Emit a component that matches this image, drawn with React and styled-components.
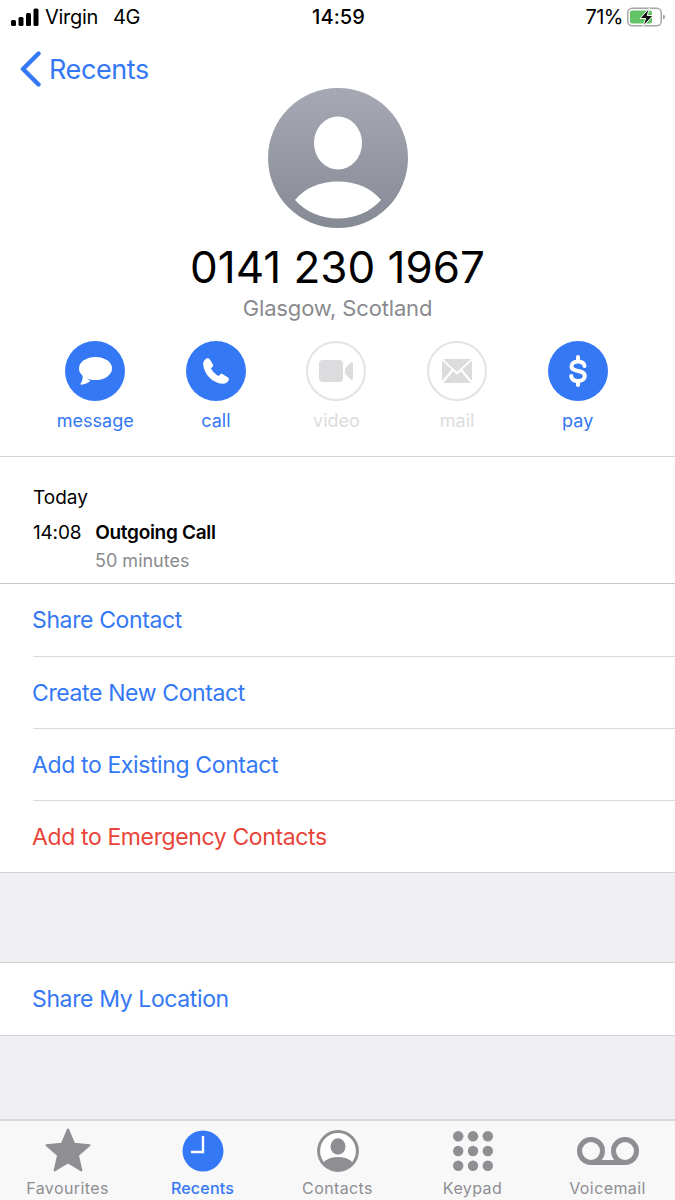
import React from "react";
import styled, { createGlobalStyle } from "styled-components";

const BLUE = "#3478f6";
const TAB_GREY = "#8e8e93";

const GlobalStyle = createGlobalStyle`
  html, body {
    margin: 0;
    padding: 0;
    background: #fff;
  }
  body {
    font-family: Inter, "Liberation Sans", sans-serif;
    color: #000;
  }
  * {
    box-sizing: border-box;
  }
`;

const Screen = styled.div`
  width: 675px;
  height: 1200px;
  display: flex;
  flex-direction: column;
  background: #efeff4;
  overflow: hidden;
`;

const Top = styled.div`
  background: #fff;
  height: 456px;
  display: flex;
  flex-direction: column;
`;

const StatusBar = styled.div`
  height: 34px;
  padding: 0 9px 0 11px;
  display: grid;
  grid-template-columns: 1fr auto 1fr;
  align-items: center;
  font-size: 20px;
`;

const StatusLeft = styled.div`
  display: flex;
  align-items: center;
  gap: 6px;
`;

const Carrier = styled.span`
  letter-spacing: -0.3px;
`;

const Network = styled.span`
  margin-left: 9px;
  letter-spacing: -0.3px;
`;

const Clock = styled.div`
  font-weight: 500;
  letter-spacing: 0.1px;
`;

const StatusRight = styled.div`
  display: flex;
  justify-content: flex-end;
  align-items: center;
  gap: 4px;
  letter-spacing: -0.5px;
`;

const NavBar = styled.div`
  height: 54px;
  padding: 16px 0 0 20px;
  display: flex;
  align-items: center;
  gap: 7px;
  color: ${BLUE};
  font-size: 27px;
  letter-spacing: -0.4px;
`;

const Hero = styled.div`
  display: flex;
  flex-direction: column;
  align-items: center;
`;

const Number = styled.div`
  margin-top: 13px;
  font-size: 44px;
  line-height: 53px;
`;

const Place = styled.div`
  font-size: 22px;
  line-height: 28px;
  color: #8a8a8e;
  letter-spacing: -0.15px;
`;

const Actions = styled.div`
  margin-top: 19px;
  padding: 0 37px 0 35px;
  display: grid;
  grid-template-columns: repeat(5, 1fr);
`;

const Action = styled.div`
  display: flex;
  flex-direction: column;
  align-items: center;
  gap: 9px;
`;

const ActionCircle = styled.div`
  width: 60px;
  height: 60px;
  border-radius: 50%;
  display: flex;
  align-items: center;
  justify-content: center;
  background: ${(p) => (p.$off ? "#fff" : BLUE)};
  border: ${(p) => (p.$off ? "2px solid #e3e3e5" : "none")};
`;

const ActionLabel = styled.div`
  font-size: 18px;
  line-height: 22px;
  color: ${(p) => (p.$off ? "#dcdcde" : BLUE)};
`;

const History = styled.div`
  background: #fff;
  border-top: 1px solid #d4d4d6;
  border-bottom: 1px solid #c8c8cb;
  height: 128px;
  padding: 29px 33px 0;
`;

const DayTitle = styled.div`
  font-size: 19px;
  line-height: 24px;
`;

const CallRow = styled.div`
  margin-top: 11px;
  display: flex;
  gap: 14px;
  font-size: 19px;
  line-height: 24px;
`;

const CallTime = styled.div`
  letter-spacing: -0.2px;
`;

const CallTitle = styled.div`
  font-weight: 600;
  letter-spacing: -0.3px;
`;

const CallLength = styled.div`
  margin: 4px 0 0 62px;
  font-size: 18px;
  line-height: 24px;
  color: #8a8a8e;
`;

const List = styled.div`
  background: #fff;
  border-bottom: 1px solid #d4d4d6;
  border-top: ${(p) => (p.$spaced ? "1px solid #d4d4d6" : "none")};
  margin-top: ${(p) => (p.$spaced ? "89px" : "0")};
`;

const Row = styled.div`
  height: 72px;
  margin-left: 33px;
  display: flex;
  align-items: center;
  font-size: 23px;
  letter-spacing: -0.38px;
  text-indent: -1px;
  color: ${(p) => (p.$danger ? "#e9443a" : BLUE)};
  border-top: ${(p) => (p.$first ? "none" : "1px solid #d9d9db")};
`;

const TabBar = styled.div`
  margin-top: auto;
  height: 81px;
  background: #f8f8f9;
  border-top: 2px solid #d8d8dc;
  display: grid;
  grid-template-columns: repeat(5, 1fr);
`;

const Tab = styled.div`
  display: flex;
  flex-direction: column;
  align-items: center;
  color: ${(p) => (p.$active ? BLUE : TAB_GREY)};
`;

const TabIcon = styled.div`
  height: 50px;
  padding-top: 9px;
  display: flex;
  align-items: center;
  justify-content: center;
`;

const TabLabel = styled.div`
  margin-top: 7px;
  font-size: 16px;
  line-height: 20px;
  letter-spacing: ${(p) => (p.$active ? "0.2px" : "0.4px")};
  font-weight: ${(p) => (p.$active ? 500 : 400)};
`;

const Signal = () => (
  <svg width="28" height="18" viewBox="0 0 28 18" fill="#000">
    <rect x="0" y="12" width="5" height="6" rx="1.5" />
    <rect x="7.500" y="9" width="5" height="9" rx="1.5" />
    <rect x="15" y="5" width="5" height="13" rx="1.5" />
    <rect x="22.500" y="0.500" width="5" height="17.500" rx="1.5" />
  </svg>
);

const Battery = () => (
  <svg width="39" height="20" viewBox="0 0 39 20">
    <rect x="0.750" y="1.250" width="33.500" height="17.500" rx="4.500" fill="#fff" stroke="#a6a6a6" strokeWidth="1.500" />
    <rect x="3" y="3.500" width="22" height="13" rx="2" fill="#63c466" />
    <path d="M36 7.500v5c1.400-.4 2.200-1.300 2.200-2.500S37.400 7.900 36 7.500z" fill="#a6a6a6" />
    <path d="M22.500 1 13 11.500h5.600L16 19.500l10-11h-5.800z" fill="#111" stroke="#fff" strokeWidth="1" />
  </svg>
);

const BackChevron = () => (
  <svg width="22" height="36" viewBox="0 0 22 36" fill="none" stroke={BLUE} strokeWidth="4.400" strokeLinecap="round" strokeLinejoin="round">
    <path d="M18.500 2.500 3 18l15.500 15.500" />
  </svg>
);

const Avatar = () => (
  <svg width="140" height="140" viewBox="0 0 140 140">
    <defs>
      <linearGradient id="avatarFill" x1="0" y1="0" x2="0" y2="1">
        <stop offset="0" stopColor="#a6a9b3" />
        <stop offset="1" stopColor="#868a94" />
      </linearGradient>
    </defs>
    <circle cx="70" cy="70" r="70" fill="url(#avatarFill)" />
    <ellipse cx="70" cy="55" rx="24" ry="26.500" fill="#fff" />
    <path d="M27 112C37 100 52 93.500 70 93.500S103 100 113 112C102 124 87 130.500 70 130.500S38 124 27 112z" fill="#fff" />
  </svg>
);

const MessageGlyph = () => (
  <svg width="33" height="28" viewBox="0 0 33 28" fill="#fff">
    <ellipse cx="16.500" cy="11.500" rx="16.500" ry="11.500" />
    <path d="M3.500 17.500c.6 3.500-.2 6.700-1.900 9.100-.4.600 0 1.200.7 1.100 3.500-.4 6.500-1.700 9-3.800z" />
  </svg>
);

const PhoneGlyph = () => (
  <svg width="26" height="26" viewBox="0 0 26 26" fill="#fff">
    <path d="M3.500.5C4.800-.2 6 .2 6.700 1.300L9.800 6.300C10.400 7.300 10.200 8.300 9.400 9L8 10.200C9.500 13.500 12.500 16.500 15.800 18L17 16.600C17.700 15.800 18.700 15.600 19.700 16.200L24.700 19.300C25.800 20 26.200 21.200 25.500 22.500C24.300 24.700 22 26 19.500 25.800C9.500 25 1 16.500.2 6.500C0 4 1.300 1.700 3.500.5z" />
  </svg>
);

const VideoGlyph = () => (
  <svg width="34" height="22" viewBox="0 0 34 22" fill="#dcdcde">
    <rect x="0" y="0" width="24" height="22" rx="4" />
    <path d="M26 8.500 31.800 2.600c.8-.8 2.200-.2 2.200.9v15c0 1.100-1.400 1.700-2.200.9L26 13.500z" />
  </svg>
);

const MailGlyph = () => (
  <svg width="30" height="24" viewBox="0 0 30 24" fill="#dcdcde">
    <path d="M1 0h28L15 13z" />
    <path d="M0 1.500 9.800 10.600 0 22z" />
    <path d="M30 1.500 20.200 10.600 30 22z" />
    <path d="M1.200 24 11.200 12.200 15 15.700l3.800-3.500L28.800 24z" />
  </svg>
);

const DollarGlyph = () => (
  <svg width="18" height="32" viewBox="0 0 18 32" fill="none" stroke="#fff" strokeWidth="4" strokeLinecap="round">
    <path d="M9 2v4M9 26v4" />
    <path d="M15.500 11C15 8 12.500 6.500 9 6.500 5 6.500 2.500 8.500 2.500 11.200 2.500 18 15.800 14 15.800 21 15.800 24 13 26 9 26 5 26 2.500 24.200 2.200 21" />
  </svg>
);

const StarIcon = () => (
  <svg width="46" height="46" viewBox="0 0 46 46" fill={TAB_GREY} stroke={TAB_GREY} strokeWidth="2" strokeLinejoin="round">
    <path d="M23 1.500l6.200 14.300 15.300 1.400-11.600 10.100 3.500 15.200L23 34.500 9.600 42.500l3.500-15.200L1.500 17.200l15.300-1.400z" />
  </svg>
);

const ClockIcon = () => (
  <svg width="42" height="42" viewBox="0 0 42 42">
    <circle cx="21" cy="21" r="20.500" fill={BLUE} />
    <path d="M21 6v16H9" fill="none" stroke="#fff" strokeWidth="2.400" />
  </svg>
);

const ContactIcon = () => (
  <svg width="42" height="42" viewBox="0 0 42 42">
    <defs>
      <clipPath id="contactClip">
        <circle cx="21" cy="21" r="19" />
      </clipPath>
    </defs>
    <circle cx="21" cy="21" r="19.400" fill="#fff" stroke={TAB_GREY} strokeWidth="3" />
    <ellipse cx="21" cy="16.500" rx="7.500" ry="8.300" fill={TAB_GREY} />
    <ellipse cx="21" cy="38" rx="17" ry="11" fill={TAB_GREY} clipPath="url(#contactClip)" />
  </svg>
);

const KeypadIcon = () => (
  <svg width="40" height="40" viewBox="0 0 40 40" fill={TAB_GREY}>
    {[5.200, 20, 34.800].map((cy) =>
      [5.200, 20, 34.800].map((cx) => <circle key={`${cx}-${cy}`} cx={cx} cy={cy} r="5.200" />)
    )}
  </svg>
);

const VoicemailIcon = () => (
  <svg width="62" height="28" viewBox="0 0 62 28" fill="none" stroke={TAB_GREY} strokeWidth="5">
    <circle cx="14" cy="14" r="11.500" />
    <circle cx="48" cy="14" r="11.500" />
    <path d="M14 25.500h34" />
  </svg>
);

const actions = [
  { label: "message", glyph: <MessageGlyph /> },
  { label: "call", glyph: <PhoneGlyph /> },
  { label: "video", glyph: <VideoGlyph />, off: true },
  { label: "mail", glyph: <MailGlyph />, off: true },
  { label: "pay", glyph: <DollarGlyph /> },
];

const tabs = [
  { label: "Favourites", icon: <StarIcon /> },
  { label: "Recents", icon: <ClockIcon />, active: true },
  { label: "Contacts", icon: <ContactIcon /> },
  { label: "Keypad", icon: <KeypadIcon /> },
  { label: "Voicemail", icon: <VoicemailIcon /> },
];

const App = () => (
  <Screen>
    <GlobalStyle />
    <Top>
      <StatusBar>
        <StatusLeft>
          <Signal />
          <Carrier>Virgin</Carrier>
          <Network>4G</Network>
        </StatusLeft>
        <Clock>14:59</Clock>
        <StatusRight>
          71%
          <Battery />
        </StatusRight>
      </StatusBar>
      <NavBar>
        <BackChevron />
        Recents
      </NavBar>
      <Hero>
        <Avatar />
        <Number>0141 230 1967</Number>
        <Place>Glasgow, Scotland</Place>
      </Hero>
      <Actions>
        {actions.map((a) => (
          <Action key={a.label}>
            <ActionCircle $off={a.off}>{a.glyph}</ActionCircle>
            <ActionLabel $off={a.off}>{a.label}</ActionLabel>
          </Action>
        ))}
      </Actions>
    </Top>
    <History>
      <DayTitle>Today</DayTitle>
      <CallRow>
        <CallTime>14:08</CallTime>
        <CallTitle>Outgoing Call</CallTitle>
      </CallRow>
      <CallLength>50 minutes</CallLength>
    </History>
    <List>
      <Row $first>Share Contact</Row>
      <Row>Create New Contact</Row>
      <Row>Add to Existing Contact</Row>
      <Row $danger>Add to Emergency Contacts</Row>
    </List>
    <List $spaced>
      <Row $first>Share My Location</Row>
    </List>
    <TabBar>
      {tabs.map((t) => (
        <Tab key={t.label} $active={t.active}>
          <TabIcon>{t.icon}</TabIcon>
          <TabLabel $active={t.active}>{t.label}</TabLabel>
        </Tab>
      ))}
    </TabBar>
  </Screen>
);

export default App;
